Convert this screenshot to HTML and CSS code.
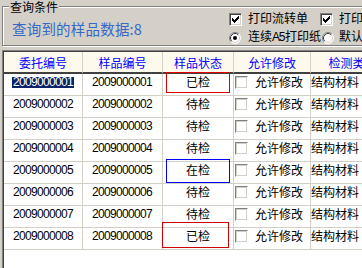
FILE: index.html
```html
<!DOCTYPE html>
<html>
<head>
<meta charset="utf-8">
<link rel="stylesheet" href="styles.css">
</head>
<body>
<div class="group">
  <span class="group-title">查询条件</span>
  <div class="group-body">
    <div class="count">查询到的样品数据:8</div>
    <div class="options">
      <div class="opt-row">
        <label class="opt opt-first"><span class="chk"><svg width="7" height="7" viewBox="0 0 7 7"><path d="M0 2h1v1h1v1h1v-1h1v-1h1v-1h1v-1h1v3h-1v1h-1v1h-1v1h-1v1h-1v-1h-1v-1h-1z" fill="#000"/></svg></span><span>打印流转单</span></label>
        <label class="opt"><span class="chk"><svg width="7" height="7" viewBox="0 0 7 7"><path d="M0 2h1v1h1v1h1v-1h1v-1h1v-1h1v-1h1v3h-1v1h-1v1h-1v1h-1v1h-1v-1h-1v-1h-1z" fill="#000"/></svg></span><span>打印流程单</span></label>
      </div>
      <div class="opt-row opt-row-2">
        <label class="opt opt-radio-first"><svg class="radio" width="12" height="12" viewBox="0 0 12 12"><circle cx="6" cy="6" r="5.5" fill="#fff"/><path d="M2.11 9.89A5.5 5.5 0 0 1 9.89 2.11" fill="none" stroke="#808080"/><path d="M9.89 2.11A5.5 5.5 0 0 1 2.11 9.89" fill="none" stroke="#fff"/><path d="M2.82 9.18A4.5 4.5 0 0 1 9.18 2.82" fill="none" stroke="#404040"/><path d="M9.18 2.82A4.5 4.5 0 0 1 2.82 9.18" fill="none" stroke="#d4d0c8"/><circle cx="6" cy="6" r="2" fill="#000"/></svg><span>连续<span class="latin">A5</span>打印纸</span></label>
        <label class="opt opt-radio"><svg class="radio" width="12" height="12" viewBox="0 0 12 12"><circle cx="6" cy="6" r="5.5" fill="#fff"/><path d="M2.11 9.89A5.5 5.5 0 0 1 9.89 2.11" fill="none" stroke="#808080"/><path d="M9.89 2.11A5.5 5.5 0 0 1 2.11 9.89" fill="none" stroke="#fff"/><path d="M2.82 9.18A4.5 4.5 0 0 1 9.18 2.82" fill="none" stroke="#404040"/><path d="M9.18 2.82A4.5 4.5 0 0 1 2.82 9.18" fill="none" stroke="#d4d0c8"/></svg><span>默认打印纸</span></label>
      </div>
    </div>
  </div>
</div>

<div class="grid">
  <div class="grid-inner">
    <div class="row head">
      <div class="cell">委托编号</div>
      <div class="cell">样品编号</div>
      <div class="cell">样品状态</div>
      <div class="cell">允许修改</div>
      <div class="cell">检测类别</div>
    </div>

    <div class="row">
      <div class="cell num"><span class="sel">2009000001</span></div>
      <div class="cell num">2009000001</div>
      <div class="cell status">已检</div>
      <div class="cell allow"><span class="cbox"></span><span class="allow-text">允许修改</span></div>
      <div class="cell kind">结构材料</div>
    </div>
    <div class="row">
      <div class="cell num">2009000002</div>
      <div class="cell num">2009000002</div>
      <div class="cell status">待检</div>
      <div class="cell allow"><span class="cbox"></span><span class="allow-text">允许修改</span></div>
      <div class="cell kind">结构材料</div>
    </div>
    <div class="row">
      <div class="cell num">2009000003</div>
      <div class="cell num">2009000003</div>
      <div class="cell status">待检</div>
      <div class="cell allow"><span class="cbox"></span><span class="allow-text">允许修改</span></div>
      <div class="cell kind">结构材料</div>
    </div>
    <div class="row">
      <div class="cell num">2009000004</div>
      <div class="cell num">2009000004</div>
      <div class="cell status">待检</div>
      <div class="cell allow"><span class="cbox"></span><span class="allow-text">允许修改</span></div>
      <div class="cell kind">结构材料</div>
    </div>
    <div class="row">
      <div class="cell num">2009000005</div>
      <div class="cell num">2009000005</div>
      <div class="cell status">在检</div>
      <div class="cell allow"><span class="cbox"></span><span class="allow-text">允许修改</span></div>
      <div class="cell kind">结构材料</div>
    </div>
    <div class="row">
      <div class="cell num">2009000006</div>
      <div class="cell num">2009000006</div>
      <div class="cell status">待检</div>
      <div class="cell allow"><span class="cbox"></span><span class="allow-text">允许修改</span></div>
      <div class="cell kind">结构材料</div>
    </div>
    <div class="row">
      <div class="cell num">2009000007</div>
      <div class="cell num">2009000007</div>
      <div class="cell status">待检</div>
      <div class="cell allow"><span class="cbox"></span><span class="allow-text">允许修改</span></div>
      <div class="cell kind">结构材料</div>
    </div>
    <div class="row">
      <div class="cell num">2009000008</div>
      <div class="cell num">2009000008</div>
      <div class="cell status">已检</div>
      <div class="cell allow"><span class="cbox"></span><span class="allow-text">允许修改</span></div>
      <div class="cell kind">结构材料</div>
    </div>

    <div class="mark mark-1"></div>
    <div class="mark mark-5"></div>
    <div class="mark mark-8"></div>
  </div>
</div>
</body>
</html>
```

FILE: styles.css
```css
* { box-sizing: border-box; }
html, body { margin: 0; padding: 0; }
body {
  width: 362px;
  height: 268px;
  overflow: hidden;
  background: #d4d0c8;
  font-family: "Liberation Sans", "Noto Sans CJK SC", sans-serif;
  font-size: 12px;
  color: #000;
}

/* group box */
.group {
  margin: 6px 0 0 2px;
  width: 420px;
  height: 40px;
  border: 1px solid #808080;
  box-shadow: inset 1px 1px 0 #fff, 1px 1px 0 #fff;
  display: flex;
  flex-direction: column;
}
.group-title {
  align-self: flex-start;
  margin: -6px 0 0 6px;
  padding: 0 1px;
  height: 12px;
  line-height: 12px;
  background: #d4d0c8;
  font-family: "Noto Sans CJK SC", sans-serif;
}
.group-body {
  display: grid;
  grid-template-columns: 226px auto;
  align-items: start;
}
.count {
  margin-top: 8px;
  padding-left: 9px;
  font-family: "Noto Sans CJK SC", sans-serif;
  font-size: 14.5px;
  line-height: 16px;
  color: #3469c9;
  letter-spacing: 0.2px;
  white-space: nowrap;
}
.options {
  margin-top: 0;
  display: flex;
  flex-direction: column;
  gap: 5px;
}
.opt-row { display: flex; height: 13px; }
.opt {
  display: flex;
  align-items: center;
  gap: 6px;
  line-height: 13px;
  white-space: nowrap;
}
.opt-first { width: 91px; }
.opt-radio-first { width: 93px; }
.opt-row-2 .opt { gap: 7px; }
.opt-row-2 .opt-radio { gap: 5px; }
.latin { letter-spacing: -1.3px; margin-right: 1px; }
.chk {
  width: 13px;
  height: 13px;
  flex: none;
  background: #fff;
  border: 1px solid;
  border-color: #808080 #fff #fff #808080;
  box-shadow: inset 1px 1px 0 #404040, inset -1px -1px 0 #d4d0c8;
  display: flex;
  align-items: center;
  justify-content: center;
}
.chk svg { display: block; }
.radio { display: block; flex: none; }

/* grid */
.grid {
  margin: 4px 0 0 2px;
  height: 218px;
  border-top: 1px solid #808080;
  border-left: 1px solid #808080;
}
.grid-inner {
  position: relative;
  height: 100%;
  border-top: 1px solid #404040;
  border-left: 1px solid #404040;
  background: #fff;
}
.row {
  display: grid;
  grid-template-columns: 79px 80px 71px 77px 84px;
  height: 22px;
}
.cell {
  border-right: 1px solid #d4d0c8;
  border-bottom: 1px solid #d4d0c8;
  line-height: 16px;
  white-space: nowrap;
  overflow: hidden;
  font-family: "Noto Sans CJK SC", sans-serif;
}
.head { background: #fdf9ec; }
.head .cell {
  border-bottom: 2px solid #404040;
  color: #0000ff;
  text-align: center;
  padding-top: 3px;
}
.num {
  font-family: "Liberation Sans", sans-serif;
  letter-spacing: -0.67px;
  padding-left: 9px;
}
.sel {
  display: inline-block;
  height: 11px;
  line-height: 11px;
  vertical-align: top;
  margin: 3px 0 0 -1px;
  padding: 0 1px 0 1px;
  background: #0a246a;
  color: #fff;
}
.status { text-align: center; }
.allow {
  display: flex;
  align-items: flex-start;
  padding-left: 1px;
}
.cbox {
  width: 13px;
  height: 13px;
  flex: none;
  margin-top: 2px;
  background: #fff;
  border: 1px solid;
  border-color: #808080 #fff #fff #808080;
  box-shadow: inset 1px 1px 0 #d4d0c8, inset -1px -1px 0 #d4d0c8;
}
.allow-text { margin-left: 7px; }
.kind { padding-left: 0; border-right: none; }

/* overlay marks on status column */
.mark {
  position: absolute;
  border: 1px solid #e00000;
}
.mark-1 { left: 162px; top: 20px; width: 64px; height: 21px; }
.mark-5 { left: 162px; top: 107px; width: 64px; height: 24px; border-color: #0000ff; }
.mark-8 { left: 158px; top: 170px; width: 67px; height: 26px; border-color: #d00000; }
```
